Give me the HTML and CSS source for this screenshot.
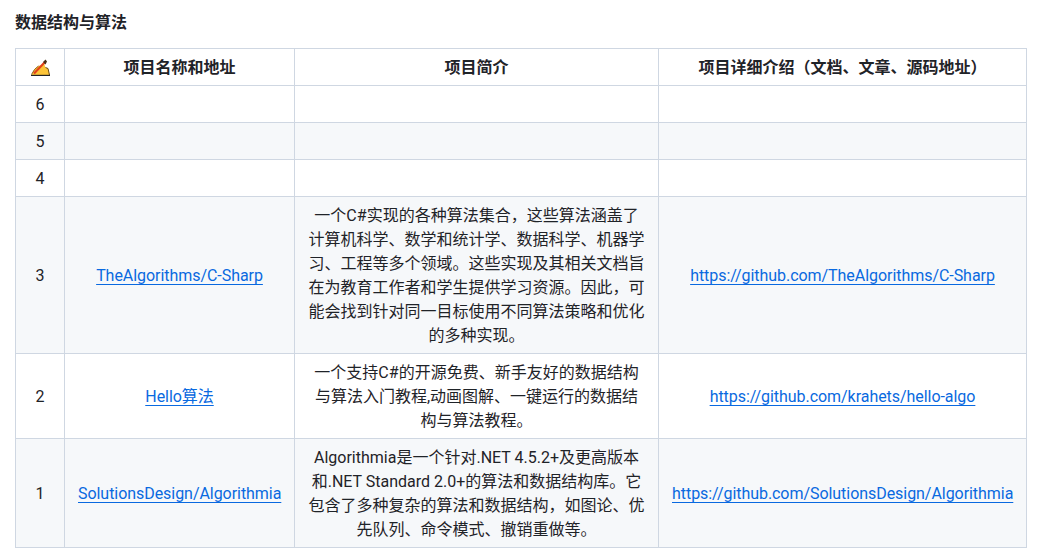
FILE: index.html
```html
<!DOCTYPE html>
<html lang="zh-CN">
<head>
<meta charset="utf-8">
<title>数据结构与算法</title>
<link rel="stylesheet" href="styles.css">
</head>
<body>
<h2 class="title">数据结构与算法</h2>
<table class="projects">
<colgroup><col class="c1"><col class="c2"><col class="c3"><col class="c4"></colgroup>
<thead>
<tr>
<th><svg class="pen" width="19" height="17" viewBox="0 0 19 17"><path d="M0.5 16 L3.5 10.5 L7.5 7 L10.5 6 L13 4 L14.5 8.5 L17 9.5 L18.5 16 Z" fill="#fcc438"/><path d="M0.5 15.5 L3.5 10.5 L7.5 7" fill="none" stroke="#8a5a10" stroke-width="1"/><path d="M14.5 8.5 L17 9.5 L18.5 16" fill="none" stroke="#6b4a10" stroke-width="1"/><path d="M3 14.5 L13.5 3.5" stroke="#e2401a" stroke-width="2.2"/><path d="M12 3 L14.5 0.5 L16 2.5 L14.5 5.5 Z" fill="#4a2f16"/><path d="M0 16.4 H19" stroke="#222" stroke-width="1.2"/></svg></th>
<th>项目名称和地址</th>
<th>项目简介</th>
<th>项目详细介绍（文档、文章、源码地址）</th>
</tr>
</thead>
<tbody>
<tr><td>6</td><td></td><td></td><td></td></tr>
<tr><td>5</td><td></td><td></td><td></td></tr>
<tr><td>4</td><td></td><td></td><td></td></tr>
<tr>
<td>3</td>
<td><a href="#">TheAlgorithms/C-Sharp</a></td>
<td>一个C#实现的各种算法集合，这些算法涵盖了计算机科学、数学和统计学、数据科学、机器学习、工程等多个领域。这些实现及其相关文档旨在为教育工作者和学生提供学习资源。因此，可能会找到针对同一目标使用不同算法策略和优化的多种实现。</td>
<td><a href="#">https://github.com/TheAlgorithms/C-Sharp</a></td>
</tr>
<tr>
<td>2</td>
<td><a href="#">Hello算法</a></td>
<td>一个支持C#的开源免费、新手友好的数据结构与算法入门教程,动画图解、一键运行的数据结构与算法教程。</td>
<td><a href="#">https://github.com/krahets/hello-algo</a></td>
</tr>
<tr>
<td>1</td>
<td><a href="#">SolutionsDesign/Algorithmia</a></td>
<td>Algorithmia是一个针对.NET 4.5.2+及更高版本和.NET Standard 2.0+的算法和数据结构库。它包含了多种复杂的算法和数据结构，如图论、优先队列、命令模式、撤销重做等。</td>
<td><a href="#">https://github.com/SolutionsDesign/Algorithmia</a></td>
</tr>
</tbody>
</table>
</body>
</html>
```

FILE: styles.css
```css
html, body { margin: 0; padding: 0; background: #fff; }
body {
  padding: 0 15px;
  font-family: Roboto, "Noto Sans CJK SC", sans-serif;
  font-size: 16px;
  line-height: 24px;
  color: #1f2328;
}
.title {
  margin: 0;
  padding-top: 11px;
  height: 48px;
  box-sizing: border-box;
  font-size: 16px;
  font-weight: 700;
  line-height: 24px;
}
.projects {
  border-collapse: collapse;
  table-layout: fixed;
  width: 1011px;
}
.c1 { width: 49px; }
.c2 { width: 230px; }
.c3 { width: 364px; }
.c4 { width: 368px; }
.projects th, .projects td {
  border: 1px solid #cfd7e2;
  padding: 7px 13px 5px;
  text-align: center;
  vertical-align: middle;
  height: 24px;
  box-sizing: content-box;
}
.projects th { font-weight: 700; }
.projects tbody tr:nth-child(even) { background: #f6f8fa; }
.projects a { color: #0969e0; text-decoration: underline; letter-spacing: -0.05px; text-underline-offset: 3px; }
.pen { display: block; margin: -2px auto 0; }
```
